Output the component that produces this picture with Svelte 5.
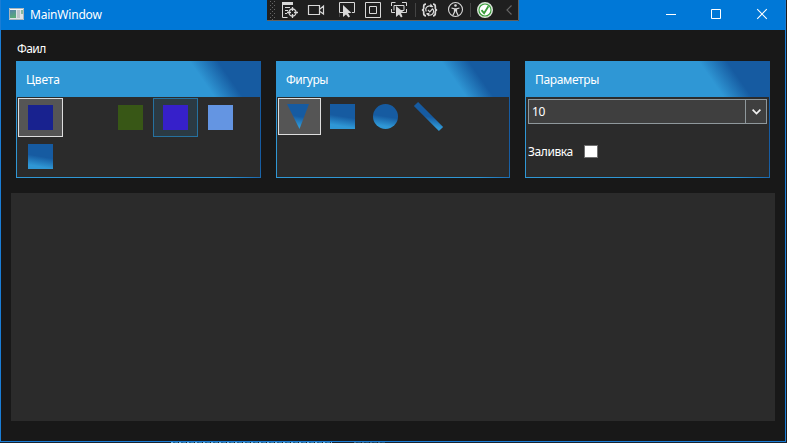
<script>
  const colors = [
    { fill: '#18228f', state: 'selected' },
    { fill: '#2b2b2b' },
    { fill: '#385716' },
    { fill: '#3620ca', state: 'hover' },
    { fill: '#6495e2' },
    { fill: 'linear-gradient(190deg, #165ba1 50%, #2f97d5 85%)' }
  ];
  const shapes = ['triangle', 'square', 'circle', 'line'];
</script>

<div class="desktop">
  <div class="window">
    <header class="titlebar">
      <svg class="app" width="15" height="12" viewBox="0 0 15 12">
        <defs><linearGradient id="app-fill" x2="0.3" y2="1"><stop stop-color="#5583ac" /><stop offset="1" stop-color="#59aa79" /></linearGradient></defs>
        <rect width="15" height="12" fill="#dce3e6" />
        <rect x="1" y="2" width="6" height="8" fill="url(#app-fill)" />
        <rect x="8" y="2" width="3" height="8" fill="#bcc5cb" />
        <rect x="12" y="2" width="2" height="4" fill="#86b9a0" />
        <path d="M.5.5h14v11H.5z" fill="none" stroke="#a9b6bd" />
        <path d="M1 1.5h13" stroke="#f5f7f8" />
      </svg>
      <span class="title">MainWindow</span>
      <svg class="controls" width="137" height="30" viewBox="0 0 137 30" fill="none" stroke="#fff">
        <path d="M18 14.5h10M63.500 9.500h9v9h-9z" />
        <path d="M109.200 9.200l9.600 9.600M118.800 9.200l-9.600 9.600" stroke-width="1.100" />
      </svg>
    </header>

    <div class="menu"><span>Фаил</span></div>

    <div class="panels">
      <section class="panel">
        <h2>Цвета</h2>
        <div class="items">
          {#each colors as color}
            <div class="item {color.state ?? ''}">
              <div class="swatch" style="background: {color.fill}"></div>
            </div>
          {/each}
        </div>
      </section>

      <section class="panel figures">
        <h2>Фигуры</h2>
        <div class="items">
          {#each shapes as shape, i}
            <div class="item small" class:selected={i === 0}>
              <svg width="25" height="25" viewBox="0 0 25 25" overflow="visible">
                <defs>
                  <linearGradient id="fill-{shape}" gradientUnits="userSpaceOnUse" x1="14.500" y1="0" x2="10.500" y2="25">
                    <stop offset="0.5" stop-color="#165ba1" /><stop offset="0.88" stop-color="#2f97d5" />
                  </linearGradient>
                </defs>
                {#if shape === 'triangle'}
                  <path d="M0 0h22L12.500 25z" fill="url(#fill-triangle)" />
                {:else if shape === 'square'}
                  <rect width="25" height="25" fill="url(#fill-square)" />
                {:else if shape === 'circle'}
                  <circle cx="12.500" cy="12.500" r="12.500" fill="url(#fill-circle)" />
                {:else}
                  <path d="M0 0l25 25" stroke="url(#fill-line)" stroke-width="6" />
                {/if}
              </svg>
            </div>
          {/each}
        </div>
      </section>

      <section class="panel">
        <h2 class="wide">Параметры</h2>
        <div class="params">
          <div class="combo">
            <span>10</span>
            <div class="arrow">
              <svg width="9" height="6" viewBox="0 0 9 6"><path d="M.6.700l3.900 3.900L8.400.700" fill="none" stroke="#f1f1f1" stroke-width="1.700" /></svg>
            </div>
          </div>
          <label><span>Заливка</span><i class="check"></i></label>
        </div>
      </section>
    </div>

    <div class="canvas"></div>
  </div>

  <div class="underlay"><div class="code"></div><div class="code short"></div></div>

  <svg class="debug" width="252" height="21" viewBox="0 0 252 21" fill="none" stroke="#d8d8d8">
    <rect width="252" height="21" fill="#1f1f1f" stroke="none" />
    <path d="M0 20.500h251.500V0" stroke="#62605d" />
    <path d="M3.500 1v19M7.500 1v19" stroke="#666" stroke-dasharray="1 3" />
    <path d="M5.500 3v17" stroke="#666" stroke-dasharray="1 3" />
    <path d="M72.500 3v14M148.500 3v14M203.500 3v14" stroke="#444" />
    <!-- live visual tree -->
    <path d="M15 3.500h11" stroke-width="3" />
    <path d="M15.500 5v12.500h5M18 7.500h5M18 10.500h3M18 13.500h2" />
    <circle cx="25.500" cy="12.500" r="3.500" stroke-width="1.300" />
    <path d="M25.500 7v4M25.500 14v4M20 12.500h4M27 12.500h4" stroke-width="1.300" />
    <!-- camera -->
    <path d="M41.500 5.500h11v9h-11zM53 9l3.500-3v8L53 11.500" stroke-width="1.200" />
    <!-- element picker -->
    <path d="M80 12.500h-7.500v-10h15v10H85" />
    <path d="M76 5v12l3-2.500 2.500 3 1.500-1-2-3.500h3.500z" fill="#d8d8d8" stroke="none" />
    <!-- layout adorners -->
    <path d="M98.500 2.500h15v15h-15zM102.500 6.500h7v7h-7z" />
    <!-- track focus -->
    <path d="M124.500 6V2.500h4M135 2.500h4.500V6M139.500 9v3.500H136M128 12.500h-3.500V9M127 10.500V5.500h10v5h-3" />
    <path d="M129 6v11l3-2.500 2 3 1.500-1-1.500-3.500h3.500z" fill="#d8d8d8" stroke="none" />
    <!-- hot reload -->
    <path d="M159 4.200q-2.300 0-2.300 2.300v1.700q0 1.500-1.700 1.800 1.700.3 1.700 1.800v1.700q0 2.300 2.300 2.300M166 4.200q2.300 0 2.300 2.300v1.700q0 1.500 1.700 1.800-1.700.3-1.700 1.800v1.700q0 2.300-2.300 2.300" stroke-width="1.700" />
    <path d="M165.500 7.200a3.800 3.800 0 0 0-6.200 4.300M159.500 13.500a3.800 3.800 0 0 0 6.400-4.500M161 10l1.800 1.800 3-3.300" stroke-width="1.200" />
    <path d="M163.500 3.500l3 3.500h-3.500zM161.500 16.500l-2-3.500h3z" fill="#d8d8d8" stroke="none" />
    <!-- accessibility -->
    <circle cx="188.500" cy="9.500" r="7" stroke-width="1.100" />
    <circle cx="188.500" cy="5.500" r="1.300" fill="#d8d8d8" stroke="none" />
    <path d="M184.500 8l3 .8h2l3-.8M188.500 8.500v3M187.500 9v3l-1.700 3.500M189.500 9v3l1.700 3.500" stroke-width="1.200" />
    <!-- status -->
    <circle cx="218" cy="10" r="7.300" fill="#e8f1e7" stroke="#d7e2d6" stroke-width="1.400" />
    <circle cx="218" cy="10" r="6" fill="#fff" stroke="#389c39" stroke-width="1.100" />
    <path d="M214.500 10.200l2.600 3 4.300-7" stroke="#389c39" stroke-width="1.800" />
    <path d="M244.500 5.500L240 10l4.500 4.500" stroke="#666" stroke-width="1.200" />
  </svg>
</div>

<style>
  :global(body) { margin: 0; }
  .desktop {
    position: relative;
    width: 787px;
    height: 443px;
    overflow: hidden;
    background: #1b1b1c;
    font: 12px/16px 'Noto Sans', 'Open Sans', sans-serif;
    color: #fff;
  }
  .window {
    box-sizing: border-box;
    width: 786px;
    height: 442px;
    border: 1px solid #1a7dd5;
    border-top: 0;
    background: #181818;
  }
  .titlebar {
    display: flex;
    align-items: center;
    height: 30px;
    padding-left: 8px;
    background: #0078d7;
  }
  .app { margin-bottom: 2px; }
  .title { margin: 0 auto 1px 6px; letter-spacing: -0.2px; }
  .menu { height: 31px; padding-left: 16px; box-sizing: border-box; padding-top: 11px; }
  .menu span { letter-spacing: -0.6px; }
  .panels { display: flex; gap: 15px; padding-left: 15px; }
  .panel {
    box-sizing: border-box;
    width: 245px;
    height: 117px;
    padding: 0 1px 1px;
    background: linear-gradient(55deg, #2f97d5 64%, #165ba1 78%);
    display: flex;
    flex-direction: column;
  }
  .figures { width: 234px; }
  h2 {
    flex: none;
    margin: 0 -1px;
    height: 36px;
    padding: 1px 0 0 10px;
    box-sizing: border-box;
    font: 12px/36px 'Noto Sans', 'Open Sans', sans-serif;
    letter-spacing: -0.1px;
    background: linear-gradient(55deg, #2f97d5 73.5%, #165ba1 84%);
  }
  .figures h2 { letter-spacing: -0.55px; }
  h2.wide { letter-spacing: -0.35px; }
  .items, .params { flex: 1; background: #2b2b2b; }
  .items {
    display: flex;
    flex-wrap: wrap;
    align-content: flex-start;
    padding: 1px 0 0 1px;
  }
  .item {
    box-sizing: border-box;
    width: 45px;
    height: 39px;
    padding: 6px 9px;
    border: 1px solid transparent;
  }
  .small { width: 43px; height: 37px; padding: 5px 8px; }
  .item svg { display: block; }
  .selected { background: #555; border-color: #dedede; }
  .hover { background: #2b3a43; border-color: #26719f; }
  .swatch { width: 25px; height: 25px; }
  .params { padding: 2px; }
  .combo {
    box-sizing: border-box;
    display: flex;
    height: 25px;
    border: 1px solid #8f989c;
    background: #3f3f3f;
    line-height: 24px;
  }
  .combo span { flex: 1; padding-left: 3px; letter-spacing: -0.3px; }
  .arrow {
    display: flex;
    align-items: center;
    justify-content: center;
    width: 20px;
    border-left: 1px solid #8f989c;
  }
  label { display: flex; align-items: center; gap: 11px; height: 16px; margin-top: 20px; }
  label span { letter-spacing: -0.4px; }
  .check { width: 12px; height: 11px; margin-bottom: 2px; border: 1px solid #707070; background: #fff; }
  .canvas { width: 764px; height: 228px; margin: 15px 0 0 10px; background: #2b2b2b; }
  .underlay { display: flex; gap: 22px; height: 1px; padding-left: 171px; background: #172431; }
  .code {
    width: 161px;
    height: 1px;
    background: repeating-linear-gradient(90deg, #6eb1df 0 2px, #235f8d 2px 4px, #397ca9 4px 7px, #172431 7px 8px);
  }
  .short { width: 32px; opacity: 0.5; }
  .debug { position: absolute; left: 267px; top: 0; }
</style>
